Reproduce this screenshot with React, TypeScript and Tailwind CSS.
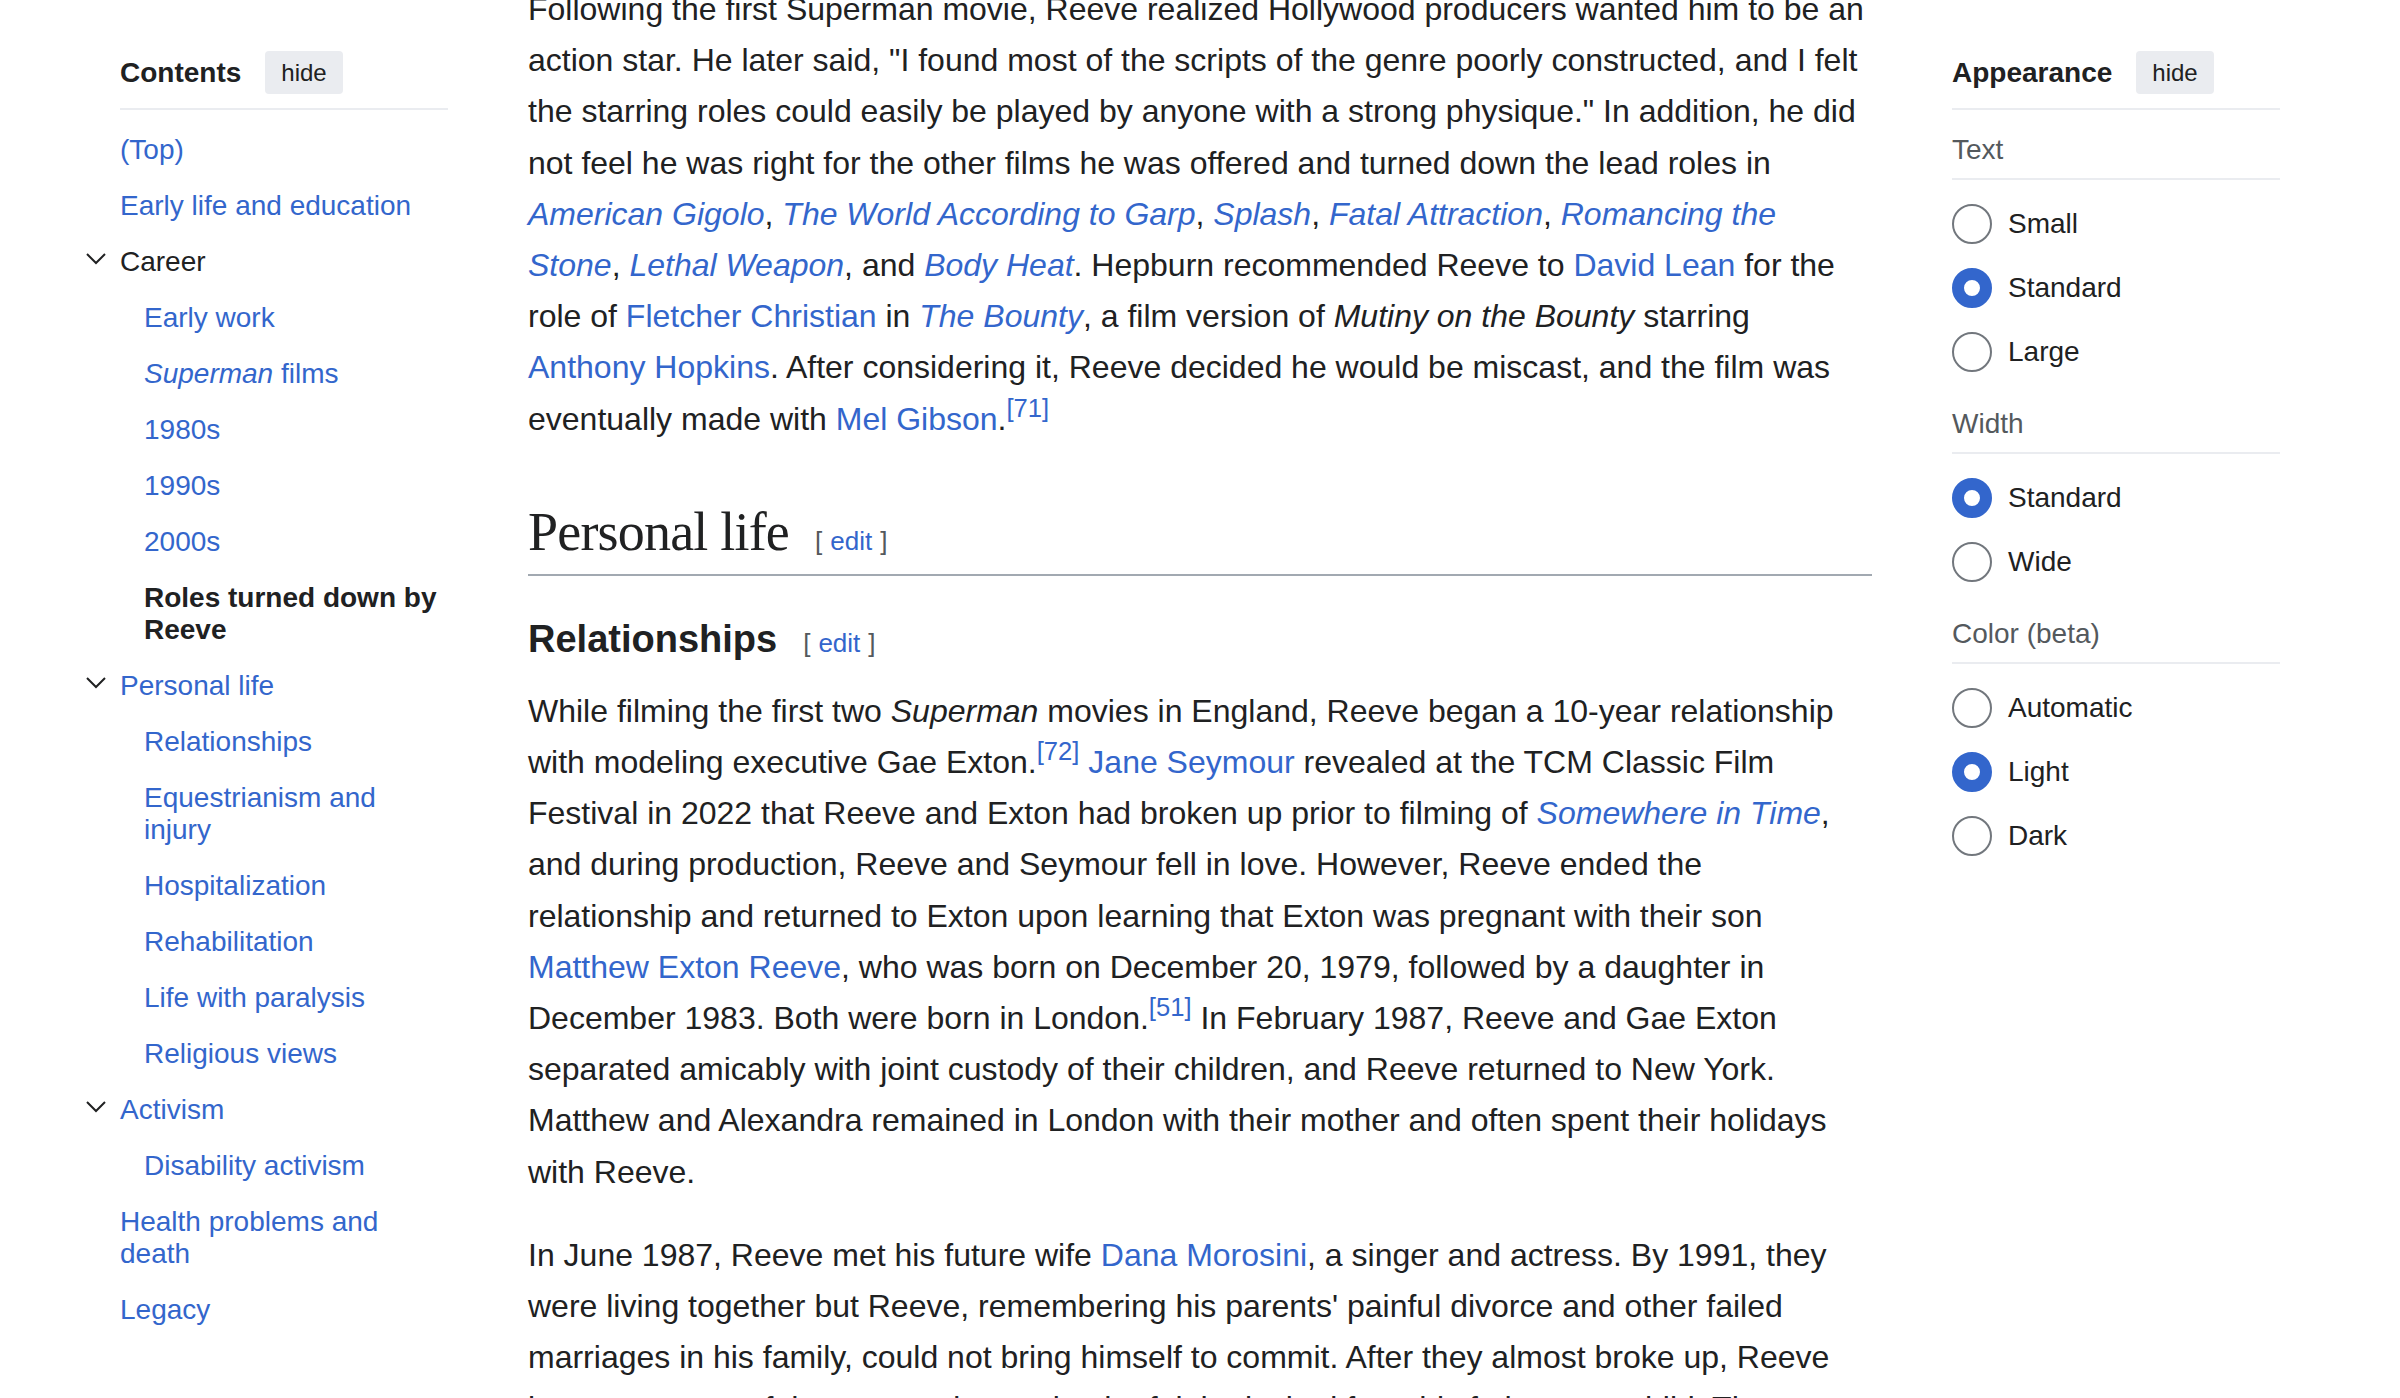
import React from "react"

const link = "text-[#3366cc]"

type TocItem = {
  label: React.ReactNode
  tone?: "link" | "dark" | "active"
  open?: boolean
  children?: TocItem[]
}

const toc: TocItem[] = [
  { label: "(Top)" },
  { label: "Early life and education" },
  {
    label: "Career",
    tone: "dark",
    open: true,
    children: [
      { label: "Early work" },
      {
        label: (
          <>
            <i>Superman</i> films
          </>
        ),
      },
      { label: "1980s" },
      { label: "1990s" },
      { label: "2000s" },
      { label: "Roles turned down by Reeve", tone: "active" },
    ],
  },
  {
    label: "Personal life",
    open: true,
    children: [
      { label: "Relationships" },
      { label: "Equestrianism and injury" },
      { label: "Hospitalization" },
      { label: "Rehabilitation" },
      { label: "Life with paralysis" },
      { label: "Religious views" },
    ],
  },
  { label: "Activism", open: true, children: [{ label: "Disability activism" }] },
  { label: "Health problems and death" },
  { label: "Legacy" },
]

const Chevron = () => (
  <svg
    width="20"
    height="20"
    viewBox="0 0 20 20"
    className="absolute left-[-34px] top-[18px]"
    fill="none"
    stroke="#202122"
    strokeWidth="2"
  >
    <path d="M1 2 L10 11 L19 2" />
  </svg>
)

const TocList = ({ items, nested }: { items: TocItem[]; nested?: boolean }) => (
  <ul className={nested ? "pl-[24px]" : "pt-[12px]"}>
    {items.map((item, i) => {
      const tone =
        item.tone === "dark"
          ? "text-[#202122]"
          : item.tone === "active"
            ? "text-[#202122] font-bold"
            : link
      return (
        <li key={i}>
          <div className={`relative py-[12px] leading-[32px] ${tone}`}>
            {item.open && <Chevron />}
            <a>{item.label}</a>
          </div>
          {item.children && <TocList items={item.children} nested />}
        </li>
      )
    })}
  </ul>
)

const PanelHeader = ({ title }: { title: string }) => (
  <div className="flex items-center gap-[24px] pb-[14px] border-b-2 border-[#eaecf0]">
    <h2 className="font-bold text-[28px] leading-[32px] text-[#202122]">{title}</h2>
    <button className="h-[43px] px-[16px] rounded-[4px] bg-[#eaecf0] text-[24px] text-[#202122]">
      hide
    </button>
  </div>
)

const Radio = ({ label, checked }: { label: string; checked?: boolean }) => (
  <label className="flex items-center gap-[16px] h-[64px]">
    <span
      className={
        checked
          ? "w-[40px] h-[40px] rounded-full border-[12px] border-[#3366cc] bg-white"
          : "w-[40px] h-[40px] rounded-full border-2 border-[#72777d] bg-white"
      }
    />
    <span className="text-[28px] text-[#202122]">{label}</span>
  </label>
)

const Group = ({ title, options, selected }: { title: string; options: string[]; selected: string }) => (
  <div>
    <div className="pt-[24px] pb-[12px] border-b-2 border-[#eaecf0] text-[28px] leading-[32px] text-[#54595d]">
      {title}
    </div>
    <div className="pt-[12px]">
      {options.map((o) => (
        <Radio key={o} label={o} checked={o === selected} />
      ))}
    </div>
  </div>
)

// section edit link; leading-none keeps it from growing the heading's line box
const Edit = () => (
  <span className="ml-[26px] text-[26px] leading-none tracking-normal font-normal font-['Liberation_Sans',Arial,sans-serif] text-[#54595d]">
    [<a className={`mx-[8px] ${link}`}>edit</a>]
  </span>
)

const Ref = ({ n }: { n: number }) => (
  <sup className={`text-[25.6px] ${link}`}>[{n}]</sup>
)

export default function App() {
  return (
    <div className="w-[2400px] h-[1398px] overflow-hidden bg-white flex gap-[80px] px-[120px] font-['Liberation_Sans',Arial,Helvetica,sans-serif] text-[#202122]">
      <nav className="w-[328px] shrink-0 pt-[51px] text-[28px]">
        <PanelHeader title="Contents" />
        <TocList items={toc} />
      </nav>

      <main className="w-[1344px] shrink-0 text-[32px] leading-[51.2px]">
        <p className="-mt-[16px] whitespace-nowrap">
          Following the first Superman movie, Reeve realized Hollywood producers wanted him to be an
          <br />
          action star. He later said, "I found most of the scripts of the genre poorly constructed, and I felt
          <br />
          the starring roles could easily be played by anyone with a strong physique." In addition, he did
          <br />
          not feel he was right for the other films he was offered and turned down the lead roles in
          <br />
          <i className={link}>American Gigolo</i>, <i className={link}>The World According to Garp</i>,{" "}
          <i className={link}>Splash</i>, <i className={link}>Fatal Attraction</i>,{" "}
          <i className={link}>Romancing the</i>
          <br />
          <i className={link}>Stone</i>, <i className={link}>Lethal Weapon</i>, and{" "}
          <i className={link}>Body Heat</i>. Hepburn recommended Reeve to <a className={link}>David Lean</a> for the
          <br />
          role of <a className={link}>Fletcher Christian</a> in <i className={link}>The Bounty</i>, a film version of{" "}
          <i>Mutiny on the Bounty</i> starring
          <br />
          <a className={link}>Anthony Hopkins</a>. After considering it, Reeve decided he would be miscast, and the film was
          <br />
          eventually made with <a className={link}>Mel Gibson</a>.<Ref n={71} />
        </p>

        <h2 className="mt-[52px] pb-[7px] border-b-2 border-[#a2a9b1] font-['Liberation_Serif','Times_New_Roman',serif] text-[54px] leading-[70px] tracking-[-0.8px] text-[#202122]">
          Personal life
          <Edit />
        </h2>

        <h3 className="mt-[39px] font-bold text-[38px] leading-[48px] text-[#202122]">
          Relationships
          <Edit />
        </h3>

        <p className="mt-[23px] whitespace-nowrap">
          While filming the first two <i>Superman</i> movies in England, Reeve began a 10-year relationship
          <br />
          with modeling executive Gae Exton.<Ref n={72} /> <a className={link}>Jane Seymour</a> revealed at the TCM Classic Film
          <br />
          Festival in 2022 that Reeve and Exton had broken up prior to filming of{" "}
          <i className={link}>Somewhere in Time</i>,
          <br />
          and during production, Reeve and Seymour fell in love. However, Reeve ended the
          <br />
          relationship and returned to Exton upon learning that Exton was pregnant with their son
          <br />
          <a className={link}>Matthew Exton Reeve</a>, who was born on December 20, 1979, followed by a daughter in
          <br />
          December 1983. Both were born in London.<Ref n={51} /> In February 1987, Reeve and Gae Exton
          <br />
          separated amicably with joint custody of their children, and Reeve returned to New York.
          <br />
          Matthew and Alexandra remained in London with their mother and often spent their holidays
          <br />
          with Reeve.
        </p>

        <p className="mt-[32px] whitespace-nowrap">
          In June 1987, Reeve met his future wife <a className={link}>Dana Morosini</a>, a singer and actress. By 1991, they
          <br />
          were living together but Reeve, remembering his parents' painful divorce and other failed
          <br />
          marriages in his family, could not bring himself to commit. After they almost broke up, Reeve
          <br />
          became aware of the care and nurturing he felt he lacked from his father as a child. The
        </p>
      </main>

      <aside className="w-[328px] shrink-0 pt-[51px]">
        <PanelHeader title="Appearance" />
        <Group title="Text" options={["Small", "Standard", "Large"]} selected="Standard" />
        <Group title="Width" options={["Standard", "Wide"]} selected="Standard" />
        <Group title="Color (beta)" options={["Automatic", "Light", "Dark"]} selected="Light" />
      </aside>
    </div>
  )
}
